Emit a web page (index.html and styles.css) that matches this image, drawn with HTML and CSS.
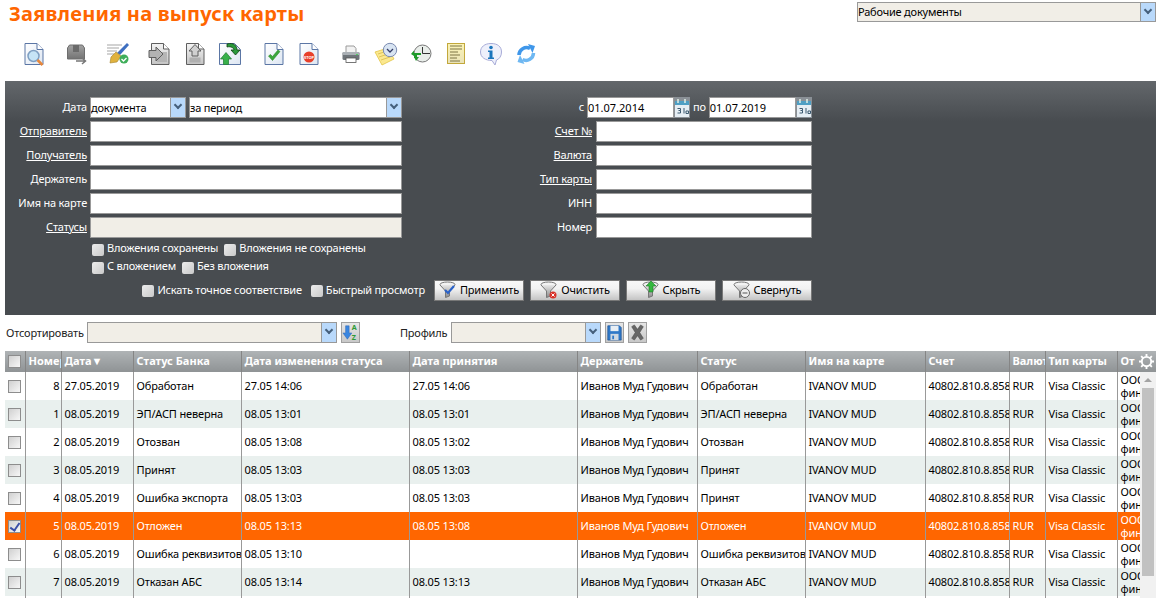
FILE: index.html
```html
<!DOCTYPE html>
<html lang="ru">
<head>
  <meta charset="UTF-8">
  <title>Заявления на выпуск карты</title>
  <link rel="stylesheet" href="styles.css">
</head>
<body>
  <svg class="defs" aria-hidden="true">
    <defs>
      <linearGradient id="paper" x1="0" y1="0" x2="1" y2="1"><stop offset="0" stop-color="#fff"/><stop offset="1" stop-color="#dde6f2"/></linearGradient>
      <linearGradient id="graypaper" x1="0" y1="0" x2="0" y2="1"><stop offset="0" stop-color="#f4f4f4"/><stop offset="1" stop-color="#c4c4c4"/></linearGradient>
      <linearGradient id="funnel" x1="0" y1="0" x2="0" y2="1"><stop offset="0" stop-color="#e8e8e8"/><stop offset="1" stop-color="#8a8a8a"/></linearGradient>
      <linearGradient id="chest" x1="0" y1="0" x2="0" y2="1"><stop offset="0" stop-color="#a2a2a2"/><stop offset="1" stop-color="#737373"/></linearGradient>
      <linearGradient id="gold" x1="0" y1="0" x2="0" y2="1"><stop offset="0" stop-color="#fbf3b4"/><stop offset="1" stop-color="#e9e2b8"/></linearGradient>
      <symbol id="doc" viewBox="0 0 24 24"><path d="M3 1.500h12l6 6v15H3z" fill="url(#paper)" stroke="#5b76a5"/><path d="M15 1.500v6h6" fill="#fff" stroke="#5b76a5"/></symbol>
      <symbol id="graydoc" viewBox="0 0 24 24"><path d="M3.500 1.500h12l5.500 5.500v15.500H3.500z" fill="url(#graypaper)" stroke="#5f5f5f"/><path d="M15.500 1.500V7H21" fill="#fff" stroke="#5f5f5f"/></symbol>
      <symbol id="filter" viewBox="0 0 18 18"><ellipse cx="8.500" cy="3.500" rx="7.500" ry="2.500" fill="#f2f2f2" stroke="#777"/><path d="M1 4l5.500 6v6.500l4-1.500v-5l5.500-6" fill="url(#funnel)" stroke="#777"/></symbol>
      <symbol id="cal" viewBox="0 0 16 21"><rect width="16" height="21" fill="#8a9096"/><rect x="1" y="4" width="14" height="4" fill="#4f9fc4"/><rect x="1" y="8" width="14" height="12" fill="#e6eef4"/><path d="M4 2v4M11 2v4" stroke="#dff0e8" stroke-width="1.500"/><path d="M3.500 11.500h3v2h-2m2 0v2.500h-3M10 11v5.500M12 14v2.500h2.500V14z" stroke="#3c5a70" fill="none"/></symbol>
    </defs>
  </svg>

  <header class="page-head">
    <h1>Заявления на выпуск карты</h1>
    <div class="select select-docs">
      <select><option>Рабочие документы</option></select>
      <span class="arrow"></span>
    </div>
  </header>

  <div class="toolbar">
    <svg class="icon" viewBox="0 0 24 24"><use href="#doc"/><circle cx="11.500" cy="14" r="5.500" fill="#c6e4f6" stroke="#7f9fc2" stroke-width="1.500"/><path d="M15.500 18l5 5" stroke="#e8873a" stroke-width="2.500"/></svg>
    <svg class="icon gap" viewBox="0 0 24 24"><path d="M3.500 6l2-3h13l2 3v11h-17z" fill="url(#chest)" stroke="#6e6e6e"/><path d="M9 3h6v7H9z" fill="#6a6a6a"/><path d="M12 19h9m-3-3l3.500 3-3.500 3" fill="none" stroke="#777" stroke-width="1.500"/></svg>
    <svg class="icon gap" viewBox="0 0 24 24"><path d="M1 3h15M1 6h12M1 9h10M1 12h7" stroke="#a5a5a5"/><path d="M21 1l2 2-9 10-3-2z" fill="#3f6fc0"/><path d="M10 10l5 4-4 6-7 1 1-6z" fill="#e0b23e" stroke="#a5822a" stroke-width=".6"/><circle cx="18" cy="17" r="4.500" fill="#3fae5a"/><path d="M15.500 17l2 2 3-3" stroke="#fff" stroke-width="1.300" fill="none"/></svg>
    <svg class="icon gap" viewBox="0 0 24 24"><use href="#graydoc"/><rect x="9" y="10" width="10" height="10" fill="#b5b5b5"/><path d="M1 8.500h7V5l7 7-7 7v-3.500H1z" fill="#b3b3b3" stroke="#5f5f5f"/></svg>
    <svg class="icon" viewBox="0 0 24 24"><use href="#graydoc"/><path d="M12 2.500l6 6.500h-3v5H9V9H6z" fill="#d0d0d0" stroke="#5f5f5f"/><rect x="6.500" y="15.500" width="11" height="5" fill="#b0b0b0"/></svg>
    <svg class="icon" viewBox="0 0 24 24"><path d="M1.500 1.500h15l6 6v15h-21z" fill="url(#paper)" stroke="#5b76a5"/><path d="M9 2c7-2 10 2 10 6h3l-4.500 5L13 8h3c0-2-3-4-7-3z" fill="#2a9a3a" stroke="#0c3d12" stroke-width=".8"/><path d="M2.500 17h3v5.500h5V17h3L8 10.500z" fill="#38b04a" stroke="#1f7a30" stroke-width=".7"/></svg>
    <svg class="icon wide" viewBox="0 0 24 24"><use href="#doc"/><path d="M6.500 14l4 4.500 7.500-9-2-1.500-5.500 6.500-2-2z" fill="#3aa63a" stroke="#2a8a2a" stroke-width=".6"/></svg>
    <svg class="icon" viewBox="0 0 24 24"><use href="#doc"/><circle cx="12" cy="15" r="5.500" fill="#e8402a"/><text x="12" y="16.500" class="stop">STOP</text></svg>
    <svg class="icon gap" viewBox="0 0 24 24"><path d="M7 4h8l2 2.500V11H7z" fill="#f2f2f2" stroke="#9a9a9a"/><rect x="3.500" y="10" width="17" height="8" rx="1.500" fill="#6f757a"/><rect x="3.500" y="10" width="17" height="3" rx="1" fill="#aab0b5"/><rect x="7" y="16" width="10" height="4.500" fill="#fff" stroke="#555" stroke-width=".8"/><rect x="17" y="12" width="2" height="1" fill="#4fd060"/></svg>
    <svg class="icon" viewBox="0 0 24 24"><path d="M1 10l13-4 6 11-12 6z" fill="#fbe88f" stroke="#e2c445" stroke-width=".8"/><path d="M4 12l9-3M5 15l9-3M7 18l9-3" stroke="#d2b540" stroke-width=".7"/><circle cx="16" cy="8" r="6.700" fill="#d8e4f2" stroke="#7a8ab0"/><path d="M13 7l3 3 3-3" fill="none" stroke="#333c66" stroke-width="1.300"/></svg>
    <svg class="icon" viewBox="0 0 24 24"><circle cx="13.500" cy="11.500" r="8.500" fill="#e9eeea" stroke="#777"/><path d="M13.500 5v6.500H21" stroke="#333" fill="none"/><path d="M2 12l3-3.500v2.500h7v2H8v3H5v-2z" fill="#1f9a2a"/><path d="M5 15l2 4 3-4z" fill="#1f9a2a"/></svg>
    <svg class="icon" viewBox="0 0 24 24"><rect x="3.500" y="1.500" width="17" height="20" fill="url(#gold)" stroke="#c2a83c"/><path d="M6 4h12M6 7h12M6 10h8M6 13h10M6 16h7M6 19h10" stroke="#7d7445"/></svg>
    <svg class="icon" viewBox="0 0 24 24"><path d="M12 1.500c6.500 0 10.500 3 10.500 8.500 0 4-2 7-5 8l-1.500 5-3-4.500c-6.500 0-11.500-3-11.500-8.500 0-5 4-8.500 10.500-8.500z" fill="#eef0fb" stroke="#a8acd8"/><circle cx="12" cy="5.500" r="1.800" fill="#1b75bc"/><path d="M9 8.500h4.500v7H15v1.500H9v-1.500h1.500V10H9z" fill="#1b75bc"/></svg>
    <svg class="icon" viewBox="0 0 24 24"><path d="M5 13a7.500 7.500 0 0 1 11-6.500" fill="none" stroke="#3f97ea" stroke-width="3.500"/><path d="M14 2l7 2-2.500 7z" fill="#3f97ea"/><path d="M19.500 11a7.500 7.500 0 0 1-11 6.500" fill="none" stroke="#6fb8f2" stroke-width="3.500"/><path d="M10.500 22l-7-2 2.500-7z" fill="#6fb8f2"/></svg>
  </div>

  <form class="filter">
    <div class="filter-grid">
      <span class="lbl">Дата</span>
      <div class="pair">
        <div class="select select-kind"><select><option>документа</option></select><span class="arrow"></span></div>
        <div class="select select-period"><select><option>за период</option></select><span class="arrow"></span></div>
      </div>
      <span class="lbl lbl-from">с</span>
      <div class="dates">
        <div class="date"><input type="text" value="01.07.2014"><svg class="cal"><use href="#cal"/></svg></div>
        <span class="lbl">по</span>
        <div class="date"><input type="text" value="01.07.2019"><svg class="cal"><use href="#cal"/></svg></div>
      </div>

      <a class="lbl link" href="#">Отправитель</a><input class="field" type="text">
      <a class="lbl link" href="#">Счет №</a><input class="field" type="text">

      <a class="lbl link" href="#">Получатель</a><input class="field" type="text">
      <a class="lbl link" href="#">Валюта</a><input class="field" type="text">

      <span class="lbl">Держатель</span><input class="field" type="text">
      <a class="lbl link" href="#">Тип карты</a><input class="field" type="text">

      <span class="lbl">Имя на карте</span><input class="field" type="text">
      <span class="lbl">ИНН</span><input class="field" type="text">

      <a class="lbl link" href="#">Статусы</a><input class="field field-off" type="text">
      <span class="lbl">Номер</span><input class="field" type="text">
    </div>

    <div class="checks checks-first">
      <label><input class="pale" type="checkbox">Вложения сохранены</label>
      <label><input class="pale" type="checkbox">Вложения не сохранены</label>
    </div>
    <div class="checks">
      <label><input class="pale" type="checkbox">С вложением</label>
      <label><input class="pale" type="checkbox">Без вложения</label>
    </div>

    <div class="actions">
      <label><input class="pale" type="checkbox">Искать точное соответствие</label>
      <label class="quick"><input class="pale" type="checkbox">Быстрый просмотр</label>
      <button type="button" class="btn first-btn">
        <svg class="btn-icon" viewBox="0 0 18 18"><use href="#filter"/><path d="M6 9l3 3 6-7" fill="none" stroke="#2a62c8" stroke-width="2.200"/></svg>Применить</button>
      <button type="button" class="btn">
        <svg class="btn-icon" viewBox="0 0 18 18"><use href="#filter"/><circle cx="13" cy="14" r="3.500" fill="#d8322a"/><path d="M11.500 12.500l3 3m0-3l-3 3" stroke="#fff"/></svg>Очистить</button>
      <button type="button" class="btn">
        <svg class="btn-icon" viewBox="0 0 18 18"><use href="#filter"/><path d="M9 0l5 5h-3v6H7V5H4z" fill="#35b83f" stroke="#1f7a2a" stroke-width=".6"/></svg>Скрыть</button>
      <button type="button" class="btn">
        <svg class="btn-icon" viewBox="0 0 18 18"><use href="#filter"/><circle cx="12" cy="12" r="4.500" fill="#eee" stroke="#666"/><path d="M9.500 12h5" stroke="#555"/></svg>Свернуть</button>
    </div>
  </form>

  <div class="sortbar">
    <span class="sort-label">Отсортировать</span>
    <div class="select select-sort"><select></select><span class="arrow"></span></div>
    <span class="tool">
      <svg viewBox="0 0 19 21"><path d="M4 3h4v8h3l-5 7-5-7h3z" fill="#3a86e0" stroke="#2a62b0" stroke-width=".5"/><text x="11" y="8" class="az">A</text><text x="11" y="19" class="az">Z</text></svg>
    </span>
    <span class="sort-label profile-label">Профиль</span>
    <div class="select select-profile"><select></select><span class="arrow"></span></div>
    <span class="tool">
      <svg viewBox="0 0 19 21"><path d="M2 3h13l2 2v14H2z" fill="#2f78c8" stroke="#1c5296" stroke-width=".8"/><rect x="5" y="3" width="9" height="6" fill="#e8eef4"/><rect x="5" y="12" width="9" height="7" fill="#cfd8e2"/><rect x="7" y="14" width="2" height="4" fill="#2f78c8"/></svg>
    </span>
    <span class="tool">
      <svg viewBox="0 0 19 21"><path d="M3 4l3-2 3.500 5L13 2l3 2-4 6.500 4 6.500-3 2-3.500-5L6 19l-3-2 4-6.500z" fill="#666" stroke="#4a4a4a" stroke-width=".6"/></svg>
    </span>
  </div>

  <section class="grid">
    <table class="grid-head">
      <colgroup>
        <col class="c-check"><col class="c-num"><col class="c-date"><col class="c-status"><col class="c-wide"><col class="c-wide"><col class="c-name"><col class="c-status"><col class="c-name"><col class="c-acc"><col class="c-num"><col class="c-date"><col>
      </colgroup>
      <tr>
        <th><input type="checkbox"></th>
        <th>Номер</th>
        <th>Дата▼</th>
        <th>Статус Банка</th>
        <th>Дата изменения статуса</th>
        <th>Дата принятия</th>
        <th>Держатель</th>
        <th>Статус</th>
        <th>Имя на карте</th>
        <th>Счет</th>
        <th>Валюта</th>
        <th>Тип карты</th>
        <th class="last-head">От<svg class="gear" viewBox="0 0 16 16"><circle cx="8" cy="8" r="5" fill="none" stroke="#fff" stroke-width="2"/><path d="M8 0v3M8 13v3M0 8h3M13 8h3M2.300 2.300l2.100 2.100M11.600 11.600l2.100 2.100M2.300 13.700l2.100-2.100M11.600 4.400l2.100-2.100" stroke="#fff" stroke-width="2"/></svg></th>
      </tr>
    </table>
    <div class="grid-body">
      <table class="rows">
        <colgroup>
          <col class="c-check"><col class="c-num"><col class="c-date"><col class="c-status"><col class="c-wide"><col class="c-wide"><col class="c-name"><col class="c-status"><col class="c-name"><col class="c-acc"><col class="c-num"><col class="c-date"><col>
        </colgroup>
        <tr>
          <td><input type="checkbox"></td><td class="num">8</td><td>27.05.2019</td><td>Обработан</td><td>27.05 14:06</td><td>27.05 14:06</td><td>Иванов Муд Гудович</td><td>Обработан</td><td>IVANOV MUD</td><td>40802.810.8.8581</td><td>RUR</td><td>Visa Classic</td><td class="wrap">ООО финансы</td>
        </tr>
        <tr>
          <td><input type="checkbox"></td><td class="num">1</td><td>08.05.2019</td><td>ЭП/АСП неверна</td><td>08.05 13:01</td><td>08.05 13:01</td><td>Иванов Муд Гудович</td><td>ЭП/АСП неверна</td><td>IVANOV MUD</td><td>40802.810.8.8581</td><td>RUR</td><td>Visa Classic</td><td class="wrap">ООО финансы</td>
        </tr>
        <tr>
          <td><input type="checkbox"></td><td class="num">2</td><td>08.05.2019</td><td>Отозван</td><td>08.05 13:08</td><td>08.05 13:02</td><td>Иванов Муд Гудович</td><td>Отозван</td><td>IVANOV MUD</td><td>40802.810.8.8581</td><td>RUR</td><td>Visa Classic</td><td class="wrap">ООО финансы</td>
        </tr>
        <tr>
          <td><input type="checkbox"></td><td class="num">3</td><td>08.05.2019</td><td>Принят</td><td>08.05 13:03</td><td>08.05 13:03</td><td>Иванов Муд Гудович</td><td>Принят</td><td>IVANOV MUD</td><td>40802.810.8.8581</td><td>RUR</td><td>Visa Classic</td><td class="wrap">ООО финансы</td>
        </tr>
        <tr>
          <td><input type="checkbox"></td><td class="num">4</td><td>08.05.2019</td><td>Ошибка экспорта</td><td>08.05 13:03</td><td>08.05 13:03</td><td>Иванов Муд Гудович</td><td>Принят</td><td>IVANOV MUD</td><td>40802.810.8.8581</td><td>RUR</td><td>Visa Classic</td><td class="wrap">ООО финансы</td>
        </tr>
        <tr class="selected">
          <td><input type="checkbox" checked></td><td class="num">5</td><td>08.05.2019</td><td>Отложен</td><td>08.05 13:13</td><td>08.05 13:08</td><td>Иванов Муд Гудович</td><td>Отложен</td><td>IVANOV MUD</td><td>40802.810.8.8581</td><td>RUR</td><td>Visa Classic</td><td class="wrap">ООО финансы</td>
        </tr>
        <tr>
          <td><input type="checkbox"></td><td class="num">6</td><td>08.05.2019</td><td>Ошибка реквизитов</td><td>08.05 13:10</td><td></td><td>Иванов Муд Гудович</td><td>Ошибка реквизитов</td><td>IVANOV MUD</td><td>40802.810.8.8581</td><td>RUR</td><td>Visa Classic</td><td class="wrap">ООО финансы</td>
        </tr>
        <tr>
          <td><input type="checkbox"></td><td class="num">7</td><td>08.05.2019</td><td>Отказан АБС</td><td>08.05 13:14</td><td>08.05 13:13</td><td>Иванов Муд Гудович</td><td>Отказан АБС</td><td>IVANOV MUD</td><td>40802.810.8.8581</td><td>RUR</td><td>Visa Classic</td><td class="wrap">ООО финансы</td>
        </tr>
        <tr>
          <td></td><td></td><td></td><td></td><td></td><td></td><td></td><td></td><td></td><td></td><td></td><td></td><td></td>
        </tr>
      </table>
      <div class="scrollbar"><span class="scroll-up"></span><span class="scroll-thumb"></span></div>
    </div>
  </section>
</body>
</html>
```

FILE: styles.css
```css
body {
  margin: 0;
  height: 598px;
  overflow: hidden;
  background-color: #fff;
  color: #000;
  font-family: "Noto Sans", "Liberation Sans", sans-serif;
  font-size: 11px;
  letter-spacing: -0.2px;
}

.defs {
  display: block;
  width: 0;
  height: 0;
}

/* top of the page */
.page-head {
  display: flex;
  justify-content: space-between;
  align-items: flex-start;
  height: 38px;
  padding: 2px 6px 0 9px;
  box-sizing: border-box;
}

h1 {
  margin: 0;
  color: #ff6600;
  font-size: 20px;
  font-weight: bold;
  line-height: 24px;
  letter-spacing: 0.2px;
}

.toolbar {
  display: flex;
  gap: 11px;
  height: 43px;
  padding: 4px 0 0 22px;
  box-sizing: border-box;
}

.icon {
  width: 24px;
  height: 24px;
  flex: none;
}

.icon.gap {
  margin-left: 7px;
}

.icon.wide {
  margin-left: 9px;
}

.stop {
  fill: #fff;
  font-size: 4px;
  font-weight: bold;
  letter-spacing: 0;
  text-anchor: middle;
}

/* selects */
.select {
  display: flex;
  height: 21px;
  box-sizing: border-box;
  border: 1px solid #999;
  background-color: #f1eee7;
}

.select select {
  flex: 1;
  min-width: 0;
  border: none;
  padding: 0 0 1px;
  background: transparent;
  font: inherit;
  letter-spacing: inherit;
  appearance: none;
  outline: none;
}

.arrow {
  position: relative;
  flex: none;
  width: 14px;
  border-left: 1px solid #999;
  background-color: #b9d9fb;
}

.arrow::after {
  content: "";
  position: absolute;
  left: 4px;
  top: 4px;
  width: 4px;
  height: 4px;
  border-right: 2px solid #46607c;
  border-bottom: 2px solid #46607c;
  transform: rotate(45deg);
}

.select-docs {
  width: 299px;
  height: 20px;
}

.select-kind {
  width: 96px;
  background-color: #fff;
}

.select-period {
  width: 213px;
  background-color: #fff;
}

.select-sort {
  width: 250px;
}

.select-profile {
  width: 150px;
}

/* filter panel */
.filter {
  margin: 0 6px 0 5px;
  height: 234px;
  box-sizing: border-box;
  padding-top: 16px;
  background: linear-gradient(#63676b, #484c50 40px);
  color: #fff;
}

.filter-grid {
  display: grid;
  grid-template-columns: 82px 312px 188px 216px;
  gap: 3px;
  width: 807px;
  align-items: center;
}

.lbl {
  padding-bottom: 2px;
  text-align: right;
  white-space: nowrap;
}

.filter-grid > .lbl:nth-child(4n + 3) {
  margin-right: 1px;
}

.filter-grid > .lbl.lbl-from {
  margin-right: 9px;
}

.link {
  color: #fff;
}

.pair {
  display: flex;
  gap: 3px;
}

.dates {
  display: flex;
  align-items: center;
  gap: 3px;
  margin-left: -9px;
}

.date {
  display: flex;
  width: 103px;
  height: 21px;
}

.date input {
  width: 87px;
  box-sizing: border-box;
  border: 1px solid #999;
  padding: 0;
  font: inherit;
}

.cal {
  width: 16px;
  height: 21px;
}

.field {
  height: 21px;
  box-sizing: border-box;
  border: 1px solid #999;
  padding: 0 2px;
  font: inherit;
  background-color: #fff;
}

.field-off {
  background-color: #f1eee7;
}

input[type="checkbox"] {
  appearance: none;
  position: relative;
  width: 13px;
  height: 13px;
  margin: 0;
  box-sizing: border-box;
  border: 1px solid #8d8d8d;
  background: linear-gradient(135deg, #d0d0d0, #f7f7f7);
  vertical-align: middle;
}

input[type="checkbox"].pale {
  width: 12px;
  height: 12px;
  border: none;
  border-radius: 2px;
  background: linear-gradient(135deg, #ececec, #c9c9c9);
  margin-right: 3px;
}

input[type="checkbox"]:checked::after {
  content: "";
  position: absolute;
  left: 3px;
  top: 0;
  width: 4px;
  height: 8px;
  border-right: 2px solid #3a4fa8;
  border-bottom: 2px solid #3a4fa8;
  transform: rotate(35deg);
}

.checks {
  display: flex;
  gap: 6px;
  height: 18px;
  align-items: center;
  padding-left: 87px;
}

.checks-first {
  margin-top: 1px;
}

.actions {
  display: flex;
  align-items: center;
  width: 807px;
  height: 21px;
  margin-top: 5px;
  justify-content: flex-end;
}

.actions label {
  margin-bottom: 2px;
}

.quick {
  margin-left: 9px;
}

.btn {
  display: flex;
  align-items: center;
  justify-content: center;
  gap: 3px;
  width: 90px;
  height: 21px;
  margin-left: 6px;
  padding: 0 0 2px;
  box-sizing: border-box;
  border: 1px solid #777;
  background: linear-gradient(#f8f8f8, #f2f2f2 40%, #c4c4c4);
  color: #000;
  font: inherit;
  letter-spacing: inherit;
}

.first-btn {
  margin-left: 9px;
}

.btn-icon {
  width: 18px;
  height: 18px;
  flex: none;
}

/* sort row */
.sortbar {
  display: flex;
  align-items: center;
  height: 21px;
  margin-top: 7px;
  padding-left: 6px;
  color: #222;
}

.sort-label {
  width: 81px;
}

.tool {
  display: flex;
  width: 19px;
  height: 21px;
  margin-left: 4px;
  box-sizing: border-box;
  background: linear-gradient(#e6e6e6, #c8c8c8);
  border: 1px solid #a0a0a0;
}

.tool svg {
  width: 100%;
  height: 100%;
}

.az {
  fill: #2c9a34;
  font-size: 8px;
  font-weight: bold;
}

.profile-label {
  width: 51px;
  margin-left: 40px;
}

/* table */
.grid {
  margin: 8px 6px 0 5px;
}

table {
  border-collapse: collapse;
  table-layout: fixed;
}

.grid-head {
  width: 100%;
  height: 21px;
}

.c-check { width: 20px; }
.c-num { width: 36px; }
.c-date { width: 72px; }
.c-status { width: 108px; }
.c-wide { width: 168px; }
.c-name { width: 120px; }
.c-acc { width: 84px; }

th {
  height: 21px;
  padding: 0 0 2px 3px;
  box-sizing: border-box;
  border-right: 1px solid #858585;
  background: linear-gradient(#afb3b5, #8f9395);
  color: #fff;
  font-size: 11px;
  font-weight: bold;
  letter-spacing: 0;
  text-align: left;
  white-space: nowrap;
  overflow: hidden;
}

th:last-child {
  position: relative;
  border-right: none;
}

.gear {
  position: absolute;
  right: 2px;
  top: 3px;
  width: 15px;
  height: 15px;
}

.grid-body {
  display: flex;
  height: 226px;
  overflow: hidden;
}

.rows {
  width: 1135px;
  flex: none;
}

td {
  height: 28px;
  padding: 0 0 2px 3px;
  box-sizing: border-box;
  border-right: 1px solid #999;
  letter-spacing: -0.15px;
  white-space: nowrap;
  overflow: hidden;
}

td:last-child {
  border-right: none;
}

td.num {
  padding: 0 1px 2px 0;
  text-align: right;
}

td.wrap {
  padding-bottom: 0;
  white-space: normal;
  line-height: 13px;
}

tr:nth-child(even) td {
  background-color: #e9f0ee;
}

tr.selected td {
  background-color: #ff6600;
  color: #fff;
}

.scrollbar {
  position: relative;
  width: 16px;
  flex: none;
  background-color: #f1f1f1;
}

.scroll-up {
  position: absolute;
  left: 4px;
  top: 6px;
  border-left: 4px solid transparent;
  border-right: 4px solid transparent;
  border-bottom: 4px solid #a3a3a3;
}

.scroll-thumb {
  position: absolute;
  left: 2px;
  top: 16px;
  width: 12px;
  height: 188px;
  background-color: #c1c1c1;
}
```
